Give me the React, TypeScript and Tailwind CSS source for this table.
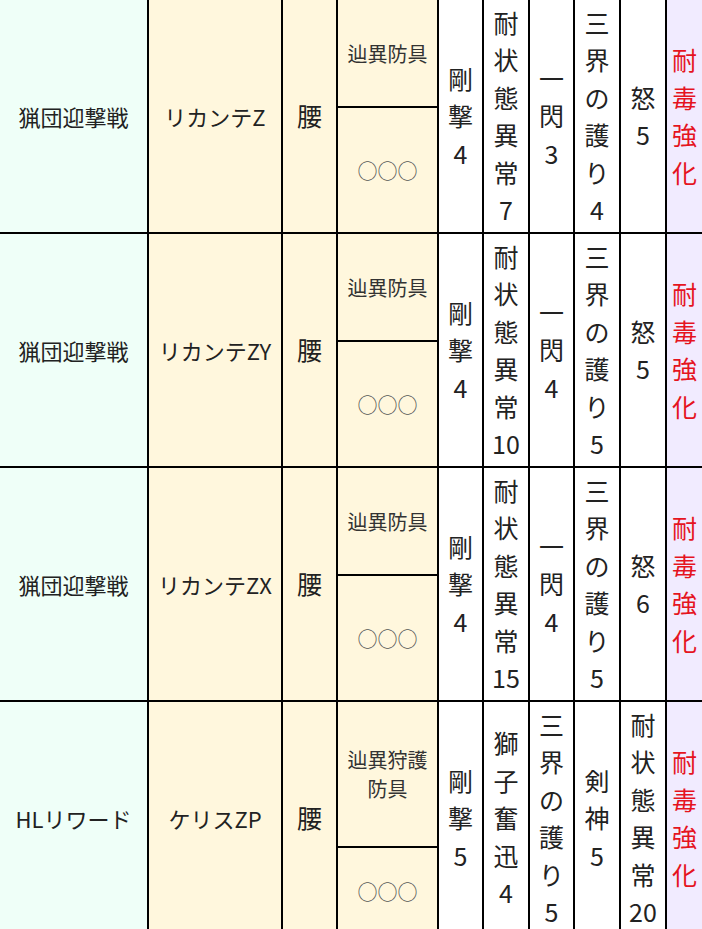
import React from "react";

type Row = {
  event: string;
  name: string;
  part: string;
  kind: string[];
  slots: string;
  skills: string[][];
  topH: string;
};

const rows: Row[] = [
  {
    event: "猟団迎撃戦",
    name: "リカンテZ",
    part: "腰",
    kind: ["辿異防具"],
    slots: "○○○",
    skills: [
      ["剛", "撃", "4"],
      ["耐", "状", "態", "異", "常", "7"],
      ["一", "閃", "3"],
      ["三", "界", "の", "護", "り", "4"],
      ["怒", "5"],
    ],
    topH: "h-[108px]",
  },
  {
    event: "猟団迎撃戦",
    name: "リカンテZY",
    part: "腰",
    kind: ["辿異防具"],
    slots: "○○○",
    skills: [
      ["剛", "撃", "4"],
      ["耐", "状", "態", "異", "常", "10"],
      ["一", "閃", "4"],
      ["三", "界", "の", "護", "り", "5"],
      ["怒", "5"],
    ],
    topH: "h-[108px]",
  },
  {
    event: "猟団迎撃戦",
    name: "リカンテZX",
    part: "腰",
    kind: ["辿異防具"],
    slots: "○○○",
    skills: [
      ["剛", "撃", "4"],
      ["耐", "状", "態", "異", "常", "15"],
      ["一", "閃", "4"],
      ["三", "界", "の", "護", "り", "5"],
      ["怒", "6"],
    ],
    topH: "h-[108px]",
  },
  {
    event: "HLリワード",
    name: "ケリスZP",
    part: "腰",
    kind: ["辿異狩護", "防具"],
    slots: "○○○",
    skills: [
      ["剛", "撃", "5"],
      ["獅", "子", "奮", "迅", "4"],
      ["三", "界", "の", "護", "り", "5"],
      ["剣", "神", "5"],
      ["耐", "状", "態", "異", "常", "20"],
    ],
    topH: "h-[146px]",
  },
];

const skillWidths = ["w-[45px]", "w-[46px]", "w-[45px]", "w-[46px]", "w-[46px]"];

function Stack({ lines, className = "" }: { lines: string[]; className?: string }) {
  return (
    <div className={"flex flex-col items-center text-[25px] leading-[37.5px] " + className}>
      {lines.map((l, i) => (
        <div key={i}>{l}</div>
      ))}
    </div>
  );
}

export default function App() {
  return (
    <div
      className="w-[702px] overflow-hidden bg-white text-[#222]"
      style={{ fontFamily: '"Noto Sans CJK JP", "Noto Sans", sans-serif' }}
    >
      {rows.map((r, idx) => (
        <div key={idx} className="flex h-[234px] border-b-2 border-black">
          <div className="flex w-[149px] shrink-0 items-center justify-center border-r-2 border-black bg-[#effff8] text-[22px] leading-[33px]">
            {r.event}
          </div>
          <div className="flex w-[134px] shrink-0 items-center justify-center border-r-2 border-black bg-[#fff7dd] text-[22px] leading-[33px]">
            {r.name}
          </div>
          <div className="flex w-[55px] shrink-0 items-center justify-center border-r-2 border-black bg-[#fff7dd] text-[25px] leading-[37.5px]">
            {r.part}
          </div>
          <div className="flex w-[101px] shrink-0 flex-col border-r-2 border-black bg-[#fff7dd]">
            <div
              className={
                "flex shrink-0 flex-col items-center justify-center border-b-2 border-black text-[20px] leading-[29px] text-[#333] " +
                r.topH
              }
            >
              {r.kind.map((k, i) => (
                <div key={i}>{k}</div>
              ))}
            </div>
            <div className="flex flex-1 items-center justify-center text-[20px] leading-[29px] text-[#555]">
              {r.slots}
            </div>
          </div>
          {r.skills.map((s, i) => (
            <div
              key={i}
              className={
                "flex shrink-0 items-center justify-center border-r-2 border-black " + skillWidths[i]
              }
            >
              <Stack lines={s} />
            </div>
          ))}
          <div className="flex flex-1 items-center justify-center bg-[#f1ebff]">
            <Stack lines={["耐", "毒", "強", "化"]} className="text-[#e5141f]" />
          </div>
        </div>
      ))}
    </div>
  );
}
